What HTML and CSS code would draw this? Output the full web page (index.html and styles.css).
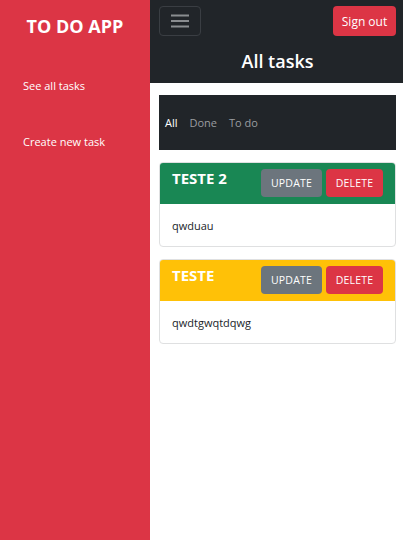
FILE: index.html
```html
<!DOCTYPE html>
<html>
<head>
<meta charset="utf-8">
<link rel="stylesheet" href="styles.css">
</head>
<body>
<div class="app">
  <aside class="sidebar">
    <h1 class="brand">TO DO APP</h1>
    <nav class="side-nav">
      <a href="#" class="side-link">See all tasks</a>
      <a href="#" class="side-link">Create new task</a>
    </nav>
  </aside>
  <main class="main">
    <header class="topbar">
      <div class="topbar-row">
        <button class="toggler" aria-label="menu">
          <svg width="20" height="16" viewBox="0 0 20 16"><path d="M1 2.5h18M1 8h18M1 13.5h18" stroke="#8a8d90" stroke-width="2" fill="none"/></svg>
        </button>
        <button class="btn btn-red signout">Sign out</button>
      </div>
      <h2 class="page-title">All tasks</h2>
    </header>
    <div class="content">
      <div class="filters">
        <a href="#" class="filter active">All</a>
        <a href="#" class="filter">Done</a>
        <a href="#" class="filter">To do</a>
      </div>
      <div class="card">
        <div class="card-head green">
          <span class="card-title">TESTE 2</span>
          <div class="actions">
            <button class="btn btn-grey">UPDATE</button>
            <button class="btn btn-red">DELETE</button>
          </div>
        </div>
        <div class="card-body">qwduau</div>
      </div>
      <div class="card">
        <div class="card-head yellow">
          <span class="card-title">TESTE</span>
          <div class="actions">
            <button class="btn btn-grey">UPDATE</button>
            <button class="btn btn-red">DELETE</button>
          </div>
        </div>
        <div class="card-body">qwdtgwqtdqwg</div>
      </div>
    </div>
  </main>
</div>
</body>
</html>
```
FILE: styles.css
```css
* { box-sizing: border-box; }
html, body { margin: 0; padding: 0; height: 100%; }
body { font-family: "Open Sans", "Noto Sans", sans-serif; color: #212529; background: #fff; }
.app { display: flex; height: 540px; }
.sidebar { width: 150px; background: #dc3545; color: #fff; flex-shrink: 0; }
.brand { margin: 0; padding-top: 13px; font-size: 18px; font-weight: 700; text-align: center; line-height: 26px; }
.side-nav { display: flex; flex-direction: column; gap: 38px; padding: 38px 0 0 23px; }
.side-link { color: #fff; text-decoration: none; font-size: 11px; line-height: 18px; }
.main { flex: 1; display: flex; flex-direction: column; }
.topbar { background: #212529; height: 83px; padding: 6px 7px 0 9px; }
.topbar-row { display: flex; justify-content: space-between; align-items: center; }
.toggler { width: 42px; height: 30px; background: transparent; border: 1px solid #3a3e43; border-radius: 4px; display: flex; align-items: center; justify-content: center; padding: 0; }
.page-title { margin: 0; margin-top: 10px; color: #fff; text-align: center; font-size: 18px; font-weight: 600; line-height: 30px; }
.btn { font-family: inherit; border: none; border-radius: 4px; color: #fff; font-size: 11px; cursor: pointer; }
.btn-red { background: #dc3545; }
.btn-grey { background: #6c757d; }
.signout { height: 30px; width: 63px; padding: 0; font-size: 12px; }
.content { padding: 12px 7px 0 9px; display: flex; flex-direction: column; gap: 12px; }
.filters { background: #212529; height: 55px; display: flex; align-items: center; gap: 12px; padding-left: 6px; }
.filter { color: #9a9da0; text-decoration: none; font-size: 11px; }
.filter.active { color: #fff; }
.card { border: 1px solid #dfe0e1; border-radius: 4px; overflow: hidden; }
.card-head { height: 41px; display: flex; justify-content: space-between; align-items: flex-start; padding: 6px 12px 0 12px; }
.green { background: #198754; }
.yellow { background: #ffc107; }
.card-title { color: #fff; font-weight: 700; font-size: 15px; line-height: 18px; padding-top: 0; }
.actions { display: flex; gap: 4px; }
.actions .btn { height: 28px; padding: 0; font-size: 10.5px; letter-spacing: 0.2px; }
.actions .btn-grey { width: 61px; }
.actions .btn-red { width: 57px; }
.card-body { height: 42px; display: flex; align-items: center; padding-left: 12px; font-size: 11px; color: #212529; }
```
